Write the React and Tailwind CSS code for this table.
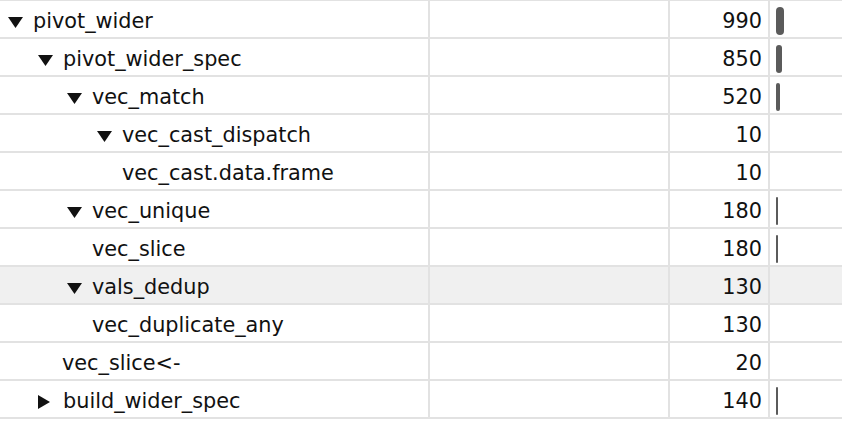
import React from 'react';

const rows = [
  { name: 'pivot_wider', pad: 33, toggle: 'open', time: 990, bar: 8 },
  { name: 'pivot_wider_spec', pad: 63, toggle: 'open', time: 850, bar: 6 },
  { name: 'vec_match', pad: 92, toggle: 'open', time: 520, bar: 4 },
  { name: 'vec_cast_dispatch', pad: 122, toggle: 'open', time: 10, bar: 0 },
  { name: 'vec_cast.data.frame', pad: 122, toggle: null, time: 10, bar: 0 },
  { name: 'vec_unique', pad: 92, toggle: 'open', time: 180, bar: 2 },
  { name: 'vec_slice', pad: 92, toggle: null, time: 180, bar: 2 },
  { name: 'vals_dedup', pad: 92, toggle: 'open', time: 130, bar: 0, selected: true },
  { name: 'vec_duplicate_any', pad: 92, toggle: null, time: 130, bar: 0 },
  { name: 'vec_slice<-', pad: 62, toggle: null, time: 20, bar: 0 },
  { name: 'build_wider_spec', pad: 63, toggle: 'closed', time: 140, bar: 2 },
];

const Toggle = ({ kind }) => {
  if (kind === 'open') {
    return (
      <svg width="15" height="11" viewBox="0 0 15 11" className="shrink-0">
        <polygon points="0,0 15,0 7.5,11" fill="#111" />
      </svg>
    );
  }
  return (
    <svg width="12" height="14" viewBox="0 0 12 14" className="shrink-0">
      <polygon points="0,0 12,7 0,14" fill="#111" />
    </svg>
  );
};

const App = () => {
  return (
    <div
      className="w-[842px] h-[422px] overflow-hidden bg-white border-t border-[#e2e2e2] text-[#111]"
      style={{ fontFamily: '"DejaVu Sans", Verdana, sans-serif' }}
    >
      {rows.map((row) => (
        <div
          key={row.name}
          className={`flex h-[38px] border-b-2 border-[#e2e2e2] ${
            row.selected ? 'bg-[#f0f0f0]' : 'bg-white'
          }`}
        >
          {/* Name */}
          <div className="w-[430px] border-r-2 border-[#e2e2e2] flex items-center relative">
            {row.toggle && (
              <div
                className="absolute top-0 bottom-0 flex items-center pt-[6px]"
                style={{ left: row.pad - 25 }}
              >
                <Toggle kind={row.toggle} />
              </div>
            )}
            <span
              className="text-[20.8px] leading-[36px] pt-[4px] whitespace-nowrap"
              style={{ paddingLeft: row.pad }}
            >
              {row.name}
            </span>
          </div>

          {/* Memory */}
          <div className="w-[240px] border-r-2 border-[#e2e2e2]"></div>

          {/* Time */}
          <div className="w-[100px] border-r-2 border-[#e2e2e2] flex items-center justify-end pr-[6px]">
            <span className="text-[20.8px] leading-[36px] pt-[4px]">{row.time}</span>
          </div>

          {/* Bar */}
          <div className="flex-1 flex items-center pl-[6px] pt-1">
            {row.bar > 0 && (
              <div
                className="h-[28px] rounded-full bg-[#5b5b5b]"
                style={{ width: row.bar }}
              ></div>
            )}
          </div>
        </div>
      ))}
    </div>
  );
};

export default App;
